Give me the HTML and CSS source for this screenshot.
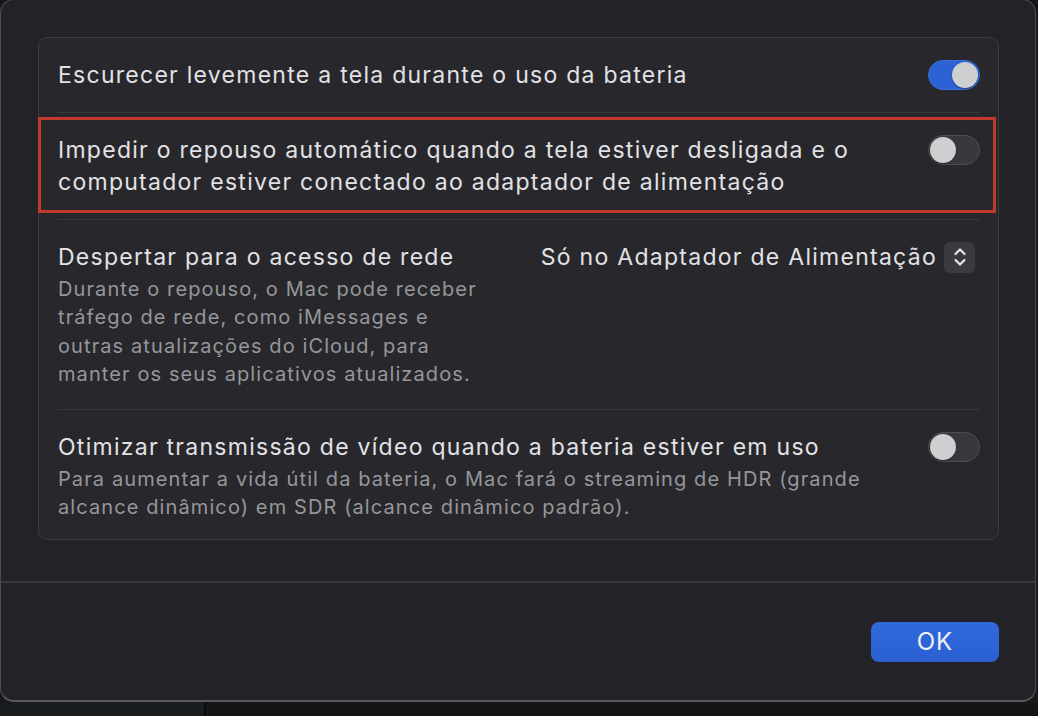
FILE: index.html
```html
<!DOCTYPE html>
<html lang="pt-BR">
<head>
<meta charset="utf-8">
<title>Bateria – Opções</title>
<link rel="stylesheet" href="styles.css">
</head>
<body>
<div class="desk">
  <div class="sheet">
    <div class="sheet-body">
      <div class="group">
        <div class="row">
          <div class="texts">
            <div class="title">Escurecer levemente a tela durante o uso da bateria</div>
          </div>
          <div class="switch on"><span class="knob"></span></div>
        </div>
        <div class="sep"></div>
        <div class="row marked">
          <div class="texts">
            <div class="title">Impedir o repouso automático quando a tela estiver desligada e o<br>computador estiver conectado ao adaptador de alimentação</div>
          </div>
          <div class="switch"><span class="knob"></span></div>
          <div class="highlight"></div>
        </div>
        <div class="sep"></div>
        <div class="row">
          <div class="texts">
            <div class="title">Despertar para o acesso de rede</div>
            <div class="desc">Durante o repouso, o Mac pode receber<br>tráfego de rede, como iMessages e<br>outras atualizações do iCloud, para<br>manter os seus aplicativos atualizados.</div>
          </div>
          <div class="popup">
            <span class="popup-label">Só no Adaptador de Alimentação</span>
            <span class="stepper">
              <svg width="16" height="22" viewBox="0 0 16 22" fill="none" stroke="#e6e6ea" stroke-width="2.2" stroke-linecap="round" stroke-linejoin="round">
                <path d="M3.5 8 L8 3.5 L12.5 8"/>
                <path d="M3.5 14 L8 18.5 L12.5 14"/>
              </svg>
            </span>
          </div>
        </div>
        <div class="sep"></div>
        <div class="row last">
          <div class="texts">
            <div class="title">Otimizar transmissão de vídeo quando a bateria estiver em uso</div>
            <div class="desc">Para aumentar a vida útil da bateria, o Mac fará o streaming de HDR (grande<br>alcance dinâmico) em SDR (alcance dinâmico padrão).</div>
          </div>
          <div class="switch"><span class="knob"></span></div>
        </div>
      </div>
    </div>
    <div class="sheet-footer">
      <button class="btn-ok">OK</button>
    </div>
  </div>
  <div class="dock-strip">
    <div class="strip-left"></div>
    <div class="strip-right"></div>
  </div>
</div>
</body>
</html>
```

FILE: styles.css
```css
html, body {
  margin: 0;
  padding: 0;
  background: #151719;
  font-family: Inter, "Noto Sans", "Liberation Sans", sans-serif;
  -webkit-font-smoothing: antialiased;
}

.desk {
  width: 1038px;
  height: 716px;
  overflow: hidden;
  position: relative;
  background: #161718;
}

.sheet {
  width: 1036px;
  height: 703px;
  box-sizing: border-box;
  margin-top: -1px;
  background: #232327;
  border: 1px solid #4d4d51;
  border-bottom: 2px solid #5a5a5e;
  border-radius: 14px;
  display: flex;
  flex-direction: column;
}

.sheet-body {
  padding: 37px 0 0 37px;
  height: 583px;
  flex: none;
  box-sizing: border-box;
  border-bottom: 2px solid #38383c;
}

.group {
  width: 961px;
  height: 503px;
  box-sizing: border-box;
  background: #28282c;
  border: 1px solid #3c3c40;
  border-radius: 9px;
}

.row {
  position: relative;
  display: flex;
  align-items: flex-start;
  justify-content: space-between;
  padding: 21px 18px 21px 19px;
}

.row.last {
  padding-bottom: 17px;
}

.sep {
  height: 1px;
  margin: 0 18px 0 19px;
  background: #38383c;
}

.title {
  font-size: 23px;
  line-height: 32px;
  color: #e2e2e6;
  letter-spacing: 1.27px;
}

.desc {
  font-size: 20px;
  line-height: 28.3px;
  color: #96969b;
  margin-top: 2px;
  letter-spacing: 1.1px;
}

.switch {
  flex: none;
  width: 52px;
  height: 30px;
  box-sizing: border-box;
  border-radius: 15px;
  background: #39393d;
  border: 1px solid #4e4e52;
  position: relative;
  margin-top: 1px;
}

.switch .knob {
  position: absolute;
  top: 1px;
  left: 1px;
  width: 26px;
  height: 26px;
  border-radius: 50%;
  background: #cfcfd2;
  box-shadow: 0 1px 2px rgba(0, 0, 0, 0.35);
}

.switch.on {
  background: #2c62d4;
  border-color: #3a6fe0;
}

.switch.on .knob {
  left: auto;
  right: 1px;
}

.highlight {
  position: absolute;
  left: -1px;
  right: 2px;
  top: 4px;
  bottom: 6px;
  border: 3px solid #c23a2b;
}

.popup {
  flex: none;
  display: flex;
  align-items: center;
  gap: 7px;
  margin-right: 5px;
  margin-top: 0;
}

.popup-label {
  font-size: 23px;
  line-height: 32px;
  color: #e2e2e6;
  letter-spacing: 1.27px;
}

.stepper {
  width: 31px;
  height: 31px;
  border-radius: 6px;
  background: #3b3b3f;
  display: flex;
  align-items: center;
  justify-content: center;
}

.sheet-footer {
  flex: 1;
  display: flex;
  justify-content: flex-end;
  align-items: flex-start;
  padding: 39px 36px 0 0;
}

.btn-ok {
  width: 128px;
  height: 40px;
  border: none;
  border-radius: 8px;
  background: linear-gradient(#3069dc, #2a60d2);
  color: #eef1f8;
  font-family: Inter, "Noto Sans", "Liberation Sans", sans-serif;
  font-size: 24px;
  line-height: 40px;
  letter-spacing: 1px;
  padding: 0;
}

.dock-strip {
  display: flex;
  height: 14px;
}

.strip-left {
  width: 204px;
  background: #181c1e;
  border-right: 2px solid #0b0b0c;
}

.strip-right {
  flex: 1;
  background: #151515;
}
```
